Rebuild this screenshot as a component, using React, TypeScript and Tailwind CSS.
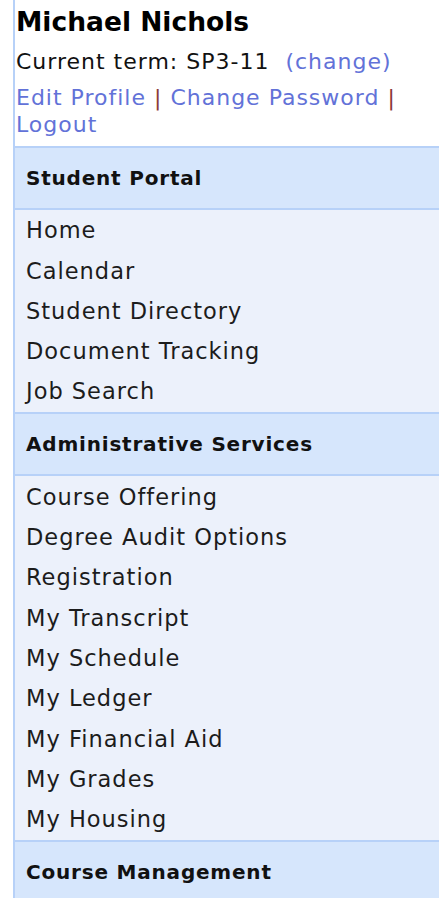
const portalLinks = ['Home', 'Calendar', 'Student Directory', 'Document Tracking', 'Job Search'];

const adminLinks = [
  'Course Offering',
  'Degree Audit Options',
  'Registration',
  'My Transcript',
  'My Schedule',
  'My Ledger',
  'My Financial Aid',
  'My Grades',
  'My Housing',
];

function SectionHeader({ title }: { title: string }) {
  return (
    <div className="h-[62px] flex items-center pl-[11px] bg-[#d6e6fc] border-t-2 border-[#b7d1f8] text-[20px] tracking-[0.8px] font-bold text-[#111]">
      {title}
    </div>
  );
}

function LinkList({ items }: { items: string[] }) {
  return (
    <ul className="bg-[#ecf1fb] border-t-2 border-[#b7d1f8] pt-[1px]">
      {items.map((item) => (
        <li key={item} className="h-[40.3px] flex items-center pl-[11px] text-[22.5px] tracking-[1px] text-[#1c1c1c]">
          <a href="#">{item}</a>
        </li>
      ))}
    </ul>
  );
}

export default function App() {
  return (
    <div className="w-[439px] h-[898px] overflow-hidden bg-white pl-[13px]" style={{ fontFamily: '"DejaVu Sans", Verdana, sans-serif' }}>
      <div className="border-l-2 border-[#b7d1f8] min-h-full">
        {/* User block */}
        <div className="pt-[6px] pb-[8px] pl-[1px]">
          <h1 className="text-[26.5px] leading-[32px] font-bold text-black">Michael Nichols</h1>
          <p className="mt-[10px] text-[22px] tracking-[1px] leading-[27px] text-[#111]">
            Current term: SP3-11 &nbsp;<a href="#" className="text-[#6272d8]">(change)</a>
          </p>
          <p className="mt-[9px] text-[22px] tracking-[1px] leading-[27px] text-[#8b3a3a]">
            <a href="#" className="text-[#6272d8]">Edit Profile</a> | <a href="#" className="text-[#6272d8]">Change Password</a> |{' '}
            <a href="#" className="text-[#6272d8]">Logout</a>
          </p>
        </div>

        <SectionHeader title="Student Portal" />
        <LinkList items={portalLinks} />
        <SectionHeader title="Administrative Services" />
        <LinkList items={adminLinks} />
        <SectionHeader title="Course Management" />
      </div>
    </div>
  );
}
